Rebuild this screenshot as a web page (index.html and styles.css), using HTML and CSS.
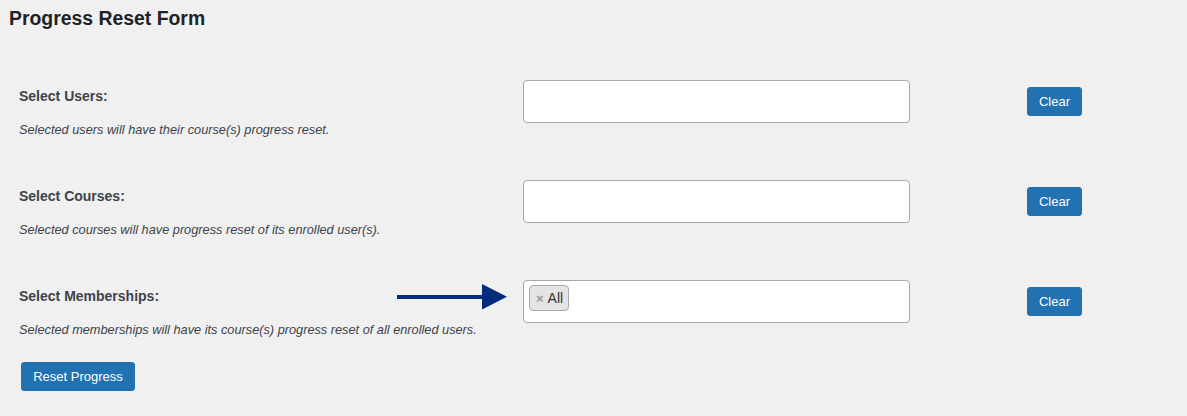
FILE: index.html
```html
<!DOCTYPE html>
<html lang="en">
<head>
<meta charset="utf-8">
<title>Progress Reset Form</title>
<link rel="stylesheet" href="styles.css">
</head>
<body>
<div class="wrap">
  <h1 class="page-title">Progress Reset Form</h1>
  <div class="form-rows">
    <div class="form-row">
      <div class="field-info">
        <div class="field-label">Select Users:</div>
        <div class="field-desc">Selected users will have their course(s) progress reset.</div>
      </div>
      <div class="select-box"></div>
      <button class="wp-button clear-btn" type="button">Clear</button>
    </div>
    <div class="form-row">
      <div class="field-info">
        <div class="field-label">Select Courses:</div>
        <div class="field-desc">Selected courses will have progress reset of its enrolled user(s).</div>
      </div>
      <div class="select-box"></div>
      <button class="wp-button clear-btn" type="button">Clear</button>
    </div>
    <div class="form-row">
      <div class="field-info annotated">
        <div class="field-label">Select Memberships:</div>
        <div class="field-desc">Selected memberships will have its course(s) progress reset of all enrolled users.</div>
        <svg class="pointer-arrow" width="111" height="26" viewBox="0 0 111 26" aria-hidden="true">
          <rect x="0" y="11" width="87" height="4" fill="#032c7b"/>
          <polygon points="85,0 110,12.75 85,25.5" fill="#032c7b"/>
        </svg>
      </div>
      <div class="select-box">
        <span class="choice"><span class="choice-remove">×</span>All</span>
      </div>
      <button class="wp-button clear-btn" type="button">Clear</button>
    </div>
  </div>
  <button class="wp-button reset-btn" type="button">Reset Progress</button>
</div>
</body>
</html>
```

FILE: styles.css
```css
html, body {
  margin: 0;
  padding: 0;
}
body {
  background: #f0f0f1;
  font-family: "Liberation Sans", Arial, sans-serif;
  color: #3c434a;
}
.wrap {
  padding: 6px 0 0 9px;
}
.page-title {
  margin: 0;
  font-size: 19.4px;
  line-height: 24px;
  font-weight: 700;
  color: #1d2327;
}
.form-rows {
  display: flex;
  flex-direction: column;
  gap: 42px;
  margin-top: 50px;
  padding-left: 10px;
}
.form-row {
  display: grid;
  grid-template-columns: 504px 387px 117px 55px;
  align-items: start;
}
.field-info {
  padding-top: 8px;
}
.annotated {
  position: relative;
}
.field-label {
  font-size: 14px;
  line-height: 16px;
  font-weight: 700;
  color: #3c434a;
}
.field-desc {
  margin-top: 18px;
  font-size: 12.75px;
  line-height: 16px;
  font-style: italic;
  color: #3c434a;
}
.pointer-arrow {
  position: absolute;
  left: 378px;
  top: 4px;
}
.select-box {
  box-sizing: border-box;
  height: 43px;
  background: #fff;
  border: 1px solid #a7a7a7;
  border-radius: 4px;
  padding: 4px 5px;
  display: flex;
  align-items: flex-start;
}
.choice {
  box-sizing: border-box;
  height: 26px;
  display: inline-flex;
  align-items: center;
  padding: 0 5px 0 6px;
  background: #e4e4e4;
  border: 1px solid #aaa;
  border-radius: 4px;
  font-size: 14px;
  color: #333;
}
.choice-remove {
  color: #999;
  font-weight: 700;
  font-size: 13px;
  margin-right: 4px;
}
.wp-button {
  box-sizing: border-box;
  height: 29px;
  padding: 0 10px;
  background: #2271b1;
  border: 1px solid #2271b1;
  border-radius: 3px;
  color: #fff;
  font-family: "Liberation Sans", Arial, sans-serif;
  font-size: 13px;
  line-height: 27px;
  cursor: pointer;
}
.clear-btn {
  grid-column: 4;
  margin-top: 7px;
  width: 55px;
  padding: 0;
}
.reset-btn {
  margin: 24px 0 0 12px;
  width: 114px;
  padding: 0;
}
```
